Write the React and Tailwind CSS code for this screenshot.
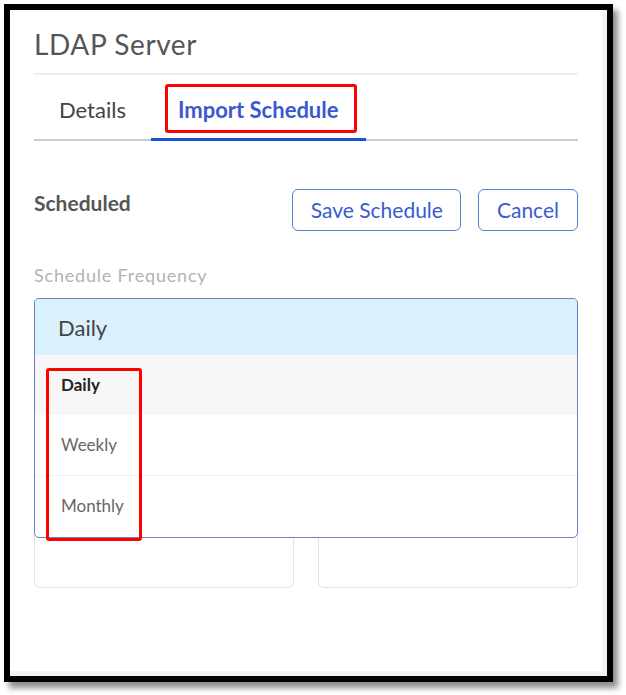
export default function App() {
  return (
    <div className="w-[626px] h-[695px] bg-white font-['Lato','Open_Sans',sans-serif] pt-[4px] pl-[4px]">
      <div className="w-[609px] h-[678px] border-[6px] border-black shadow-[5px_6px_6px_rgba(0,0,0,0.45)]">
        <div className="h-full bg-white border-r-[5px] border-b-[5px] border-[#eef3f8] px-[24px] pt-[16px]">
          <h1 className="text-[28px] leading-[36px] text-[#555] font-normal tracking-[0.6px]">LDAP Server</h1>
          <div className="mt-[11px] h-[2px] bg-[#eeeeee]" />
          <div className="flex border-b-[2px] border-[#c8cdcd] mt-[8px]">
            <div className="px-[25px] pt-[12px] pb-[13px] text-[22px] leading-[30px] text-[#444]">Details</div>
            <div className="relative px-[27px] pt-[12px] pb-[13px] text-[22px] leading-[30px] font-bold text-[#3b58d0] -mb-[2px] border-b-[3px] border-[#1c53d4]">
              Import Schedule
              <div className="absolute left-[14px] right-[9px] top-[1px] bottom-[5px] border-[3px] border-[#ff0000] rounded-[3px]" />
            </div>
          </div>
          <div className="flex items-start justify-between mt-[49px]">
            <div className="text-[21px] leading-[28px] font-bold text-[#555] -mt-[1px]">Scheduled</div>
            <div className="flex gap-[17px] -mt-[1px]">
              <button className="h-[42px] pl-[18px] pr-[17px] border-[1.5px] border-[#5b7fd6] rounded-[6px] text-[21px] text-[#3a5bd0] bg-white">Save Schedule</button>
              <button className="h-[42px] px-[18px] border-[1.5px] border-[#5b7fd6] rounded-[6px] text-[21px] text-[#3a5bd0] bg-white">Cancel</button>
            </div>
          </div>
          <div className="mt-[32px] text-[18px] leading-[24px] text-[#b3b3b3] tracking-[0.8px]">Schedule Frequency</div>
          <div className="relative mt-[11px]">
            <div className="h-[57px] border-[1.5px] border-[#6b7fc4] rounded-[5px] bg-[#daf0fc]" />
            <div className="grid grid-cols-2 gap-[24px] mt-[-20px]">
              <div className="h-[253px] border-[1.5px] border-[#e3e3e3] rounded-[6px]" />
              <div className="h-[253px] border-[1.5px] border-[#e3e3e3] rounded-[6px]" />
            </div>
            <div className="absolute left-0 right-0 top-0 h-[240px] border-[1.5px] border-[#6b7fc4] rounded-[5px] bg-white overflow-hidden flex flex-col">
              <div className="h-[56px] shrink-0 bg-[#daf0fc] flex items-center pl-[23px] text-[22px] text-[#444]">Daily</div>
              <div className="h-[60px] shrink-0 bg-[#f7f7f7] flex items-center pl-[26px] text-[17px] font-bold text-[#222]">Daily</div>
              <div className="h-[61px] shrink-0 flex items-center pl-[26px] text-[17px] text-[#666] border-b border-[#f3f3f3]">Weekly</div>
              <div className="h-[60px] shrink-0 flex items-center pl-[26px] text-[17px] text-[#666]">Monthly</div>
            </div>
            <div className="absolute left-[12px] top-[70px] w-[96px] h-[173px] border-[3px] border-[#ff0000] rounded-[3px]" />
          </div>
        </div>
      </div>
    </div>
  );
}
